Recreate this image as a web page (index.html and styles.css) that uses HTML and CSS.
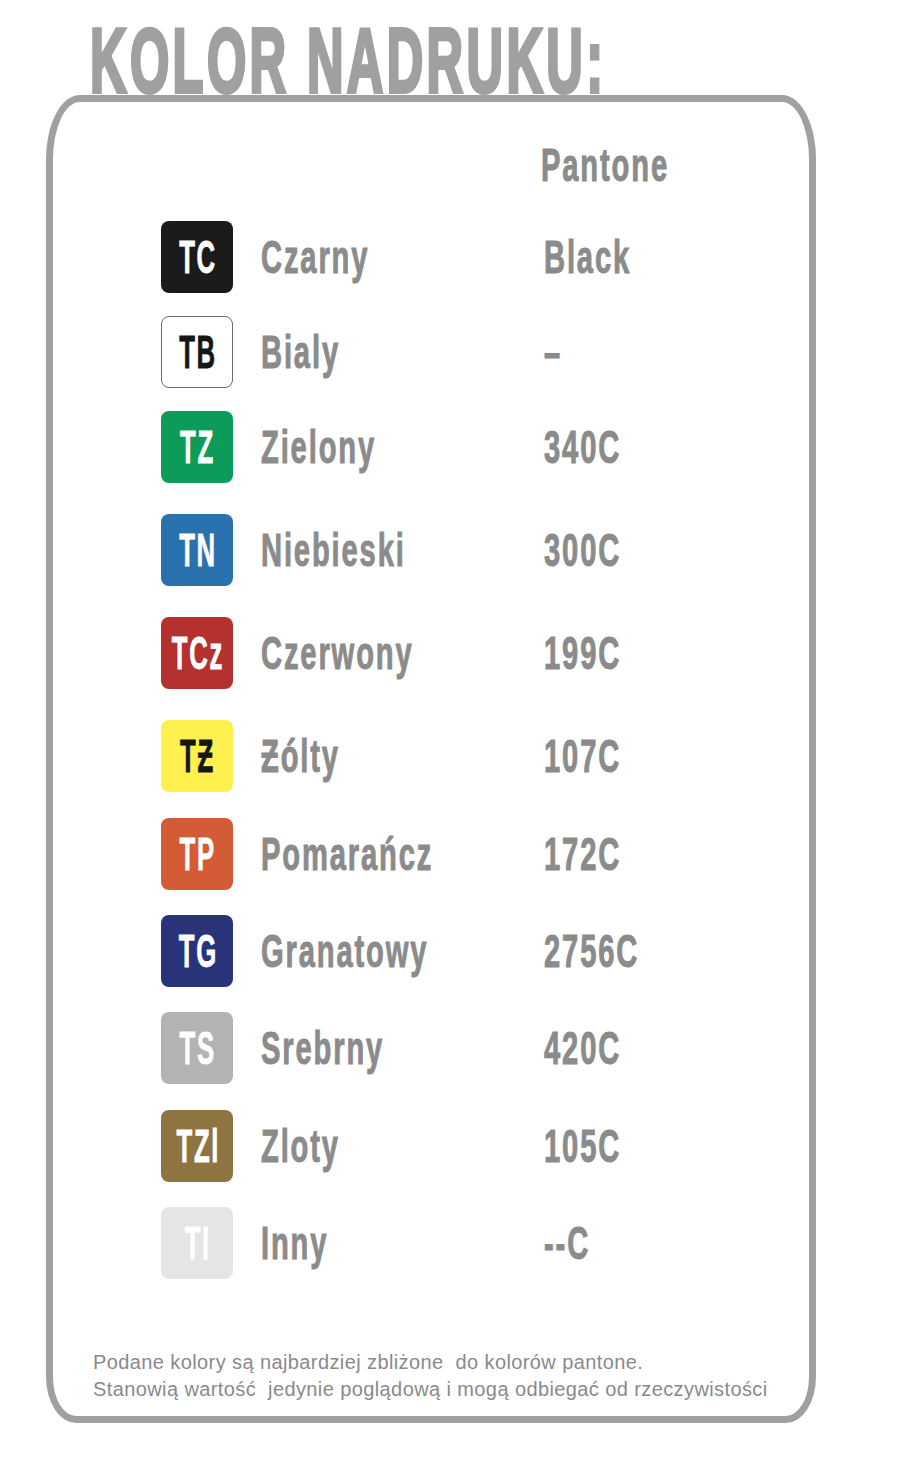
FILE: index.html
```html
<!DOCTYPE html>
<html lang="pl">
<head>
<meta charset="utf-8">
<title>Kolor nadruku</title>
<link rel="stylesheet" href="styles.css">
</head>
<body>
<div class="page">
  <h1 class="title"><span class="cond">KOLOR NADRUKU:</span></h1>
  <div class="card">
    <div class="head"><span class="cond">Pantone</span></div>
    <div class="rows">
      <div class="row row--first"><div class="badge badge--black"><span>TC</span></div><div class="name"><span>Czarny</span></div><div class="code"><span>Black</span></div></div>
      <div class="row row--tight"><div class="badge badge--white"><span>TB</span></div><div class="name"><span>Bialy</span></div><div class="code"><span>–</span></div></div>
      <div class="row row--tight"><div class="badge badge--green"><span>TZ</span></div><div class="name"><span>Zielony</span></div><div class="code"><span>340C</span></div></div>
      <div class="row row--wide"><div class="badge badge--blue"><span>TN</span></div><div class="name"><span>Niebieski</span></div><div class="code"><span>300C</span></div></div>
      <div class="row row--wide"><div class="badge badge--red"><span>TCz</span></div><div class="name"><span>Czerwony</span></div><div class="code"><span>199C</span></div></div>
      <div class="row row--wide"><div class="badge badge--yellow"><span>TƵ</span></div><div class="name"><span>Ƶólty</span></div><div class="code"><span>107C</span></div></div>
      <div class="row row--plus"><div class="badge badge--orange"><span>TP</span></div><div class="name"><span>Pomarańcz</span></div><div class="code"><span>172C</span></div></div>
      <div class="row"><div class="badge badge--navy"><span>TG</span></div><div class="name"><span>Granatowy</span></div><div class="code"><span>2756C</span></div></div>
      <div class="row"><div class="badge badge--silver"><span>TS</span></div><div class="name"><span>Srebrny</span></div><div class="code"><span>420C</span></div></div>
      <div class="row row--plus"><div class="badge badge--gold"><span>TZl</span></div><div class="name"><span>Zloty</span></div><div class="code"><span>105C</span></div></div>
      <div class="row"><div class="badge badge--other"><span>TI</span></div><div class="name"><span>Inny</span></div><div class="code"><span>--C</span></div></div>
    </div>
    <p class="note">Podane kolory są najbardziej zbliżone&nbsp; do kolorów pantone.<br>Stanowią wartość&nbsp; jedynie poglądową i mogą odbiegać od rzeczywistości</p>
  </div>
</div>
</body>
</html>
```
FILE: styles.css
```css
html, body {
  margin: 0;
  padding: 0;
  background: #ffffff;
}

body {
  font-family: "Liberation Sans", Arial, sans-serif;
}

.page {
  width: 912px;
  height: 1464px;
  padding-left: 46px;
  box-sizing: border-box;
  overflow: hidden;
}

.title {
  margin: 0;
  padding: 28px 0 0 44px;
  height: 67px;
  font-size: 90px;
  line-height: 67px;
  font-weight: 700;
  color: #a0a0a0;
  white-space: nowrap;
  overflow: visible;
}

.cond {
  display: inline-block;
  transform-origin: 0 50%;
}

.title .cond {
  letter-spacing: 6px;
  transform: scaleX(0.562);
  -webkit-text-stroke: 4px #a0a0a0;
}

.card {
  width: 770px;
  height: 1328px;
  box-sizing: border-box;
  border: 7px solid #a0a0a0;
  border-radius: 34px 34px 30px 30px / 64px 64px 46px 46px;
  display: flex;
  flex-direction: column;
}

.head {
  margin-top: 27px;
  padding-left: 488px;
  height: 72px;
  font-size: 47px;
  line-height: 72px;
  font-weight: 700;
  color: #8b8b8b;
  white-space: nowrap;
}

.head .cond {
  letter-spacing: 3px;
  transform: scaleX(0.62);
  -webkit-text-stroke: 1px #8b8b8b;
}

.rows {
  display: flex;
  flex-direction: column;
  padding-left: 108px;
}

.row {
  display: flex;
  align-items: center;
  height: 72px;
  margin-top: 25px;
}

.row--first { margin-top: 20px; }
.row--tight { margin-top: 23px; }
.row--wide { margin-top: 31px; }
.row--plus { margin-top: 26px; }

.badge {
  width: 72px;
  height: 72px;
  flex: none;
  box-sizing: border-box;
  border-radius: 8px;
  display: flex;
  align-items: center;
  justify-content: center;
  font-size: 46px;
  line-height: 72px;
  font-weight: 700;
  color: #ffffff;
  margin-right: 28px;
}

.badge span {
  display: inline-block;
  letter-spacing: 3px;
  padding-left: 3px;
  transform: scaleX(0.56);
  transform-origin: 50% 50%;
  -webkit-text-stroke: 0.8px currentColor;
  white-space: nowrap;
}

.badge--black { background: #1b1b1b; }
.badge--white { background: #ffffff; border: 1px solid #6a6a6a; color: #151515; }
.badge--green { background: #0d9b5a; }
.badge--blue { background: #2a72ad; }
.badge--red { background: #b3312f; }
.badge--yellow { background: #fdf04f; color: #151515; }
.badge--orange { background: #d35b36; }
.badge--navy { background: #28337a; }
.badge--silver { background: #b3b3b3; }
.badge--gold { background: #8e7441; }
.badge--other { background: #e5e5e5; }

.name, .code {
  font-size: 47px;
  line-height: 72px;
  font-weight: 700;
  color: #8b8b8b;
  white-space: nowrap;
}

.name {
  width: 283px;
  flex: none;
}

.name span, .code span {
  display: inline-block;
  letter-spacing: 3px;
  transform: scaleX(0.62);
  transform-origin: 0 50%;
  -webkit-text-stroke: 1px #8b8b8b;
}

.note {
  margin: auto 0 0 0;
  padding: 0 0 13px 40px;
  font-size: 20px;
  line-height: 27px;
  letter-spacing: 0.4px;
  color: #8a8a8a;
  white-space: nowrap;
}
```
